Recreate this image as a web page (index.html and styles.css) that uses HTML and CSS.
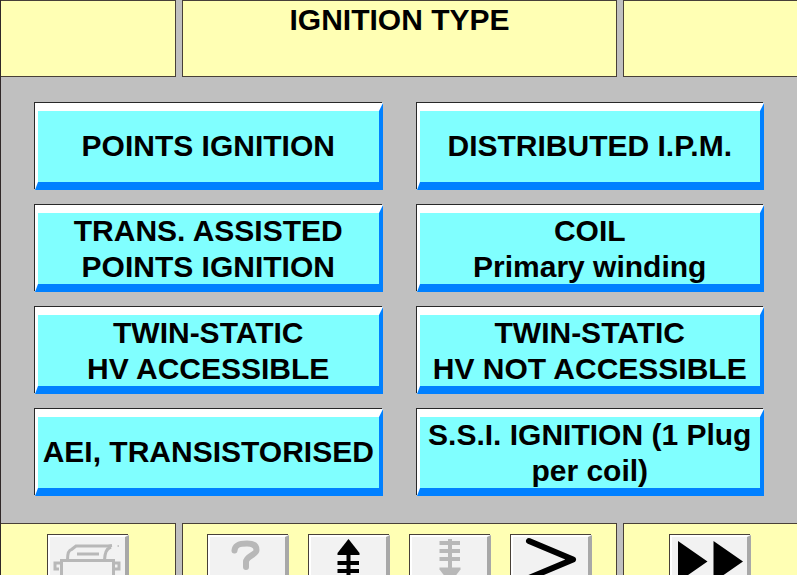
FILE: index.html
```html
<!DOCTYPE html>
<html lang="en">
<head>
    <meta charset="UTF-8">
    <meta name="viewport" content="width=device-width, initial-scale=1.0">
    <title>Ignition Type</title>
    <link rel="stylesheet" href="styles.css">
</head>
<body>
    <header class="bar">
        <div class="panel"></div>
        <div class="panel">
            <h1>IGNITION TYPE</h1>
        </div>
        <div class="panel"></div>
    </header>

    <main class="options">
        <button class="option">POINTS IGNITION</button>
        <button class="option">DISTRIBUTED I.P.M.</button>
        <button class="option">TRANS. ASSISTED<br>POINTS IGNITION</button>
        <button class="option">COIL<br>Primary winding</button>
        <button class="option">TWIN-STATIC<br>HV ACCESSIBLE</button>
        <button class="option">TWIN-STATIC<br>HV NOT ACCESSIBLE</button>
        <button class="option">AEI, TRANSISTORISED</button>
        <button class="option">S.S.I. IGNITION (1 Plug<br>per coil)</button>
    </main>

    <footer class="bar keys">
        <div class="panel">
            <button class="key" aria-label="Print" disabled>
                <svg viewBox="0 0 75 75" fill="none" stroke="currentColor" stroke-width="3">
                    <path d="M17.5 23 C17.5 17 19 13 21.5 12.5 L26 9 H58 L62 8.5"/>
                    <path d="M61 10 C56 12 55 16 54.5 23"/>
                    <path d="M27 17 H49"/>
                    <path d="M11.5 62 V23.5 H63.5 V62 Z"/>
                    <path d="M11 26 H5 V32 H9 M64 26 H69 V32 H65"/>
                    <path d="M67.5 9 H69" stroke-width="1.5"/>
                </svg>
            </button>
        </div>
        <div class="panel">
            <button class="key" aria-label="Help" disabled>
                <svg viewBox="0 0 75 75" fill="none" stroke="currentColor" stroke-width="6" stroke-linecap="round">
                    <path d="M24.5 13.5 C25 8 29 6.5 37 6.5 C44 6.5 46.5 9 46.5 13 C46.5 18 36 19 36 25 V30"/>
                    <path d="M36 41 V41.5"/>
                </svg>
            </button>
            <button class="key" aria-label="Up">
                <svg viewBox="0 0 75 75" fill="none" stroke="currentColor" stroke-width="4">
                    <path d="M37.5 2 L48.5 16 V18 H26.5 V16 Z" fill="currentColor" stroke="none"/>
                    <path d="M37.5 16 V50 M26.5 26 H48 M26.5 34 H48 M26.5 42 H48"/>
                </svg>
            </button>
            <button class="key" aria-label="Down" disabled>
                <svg viewBox="0 0 75 75" fill="none" stroke="currentColor" stroke-width="4">
                    <path d="M38 2 V32 M27.5 6 H48 M27.5 14 H48 M27.5 22 H48"/>
                    <path d="M27.5 30.5 H48.5 V32.5 L38 46 L27.5 32.5 Z" fill="currentColor" stroke="none"/>
                </svg>
            </button>
            <button class="key" aria-label="Next">
                <svg viewBox="0 0 75 75" fill="none" stroke="currentColor" stroke-width="6" stroke-linecap="round" stroke-linejoin="round">
                    <path d="M16 4 L60 22.5 L16 41"/>
                </svg>
            </button>
        </div>
        <div class="panel">
            <button class="key" aria-label="Fast forward">
                <svg viewBox="0 0 75 75" fill="currentColor">
                    <path d="M6 4 L35.5 24.5 L6 45 Z M41.5 4 L71 24.5 L41.5 45 Z"/>
                </svg>
            </button>
        </div>
    </footer>
</body>
</html>
```
FILE: styles.css
```css
* {
    box-sizing: border-box;
}

body {
    margin: 0;
    height: 100vh;
    display: flex;
    flex-direction: column;
    overflow: hidden;
    border-left: 1px solid #302828;
    background-color: #c0c0c0;
    font-family: "Liberation Sans", Arial, sans-serif;
}

/* Top and bottom rows of three yellow panels */
.bar {
    display: grid;
    grid-template-columns: 175fr 435fr 174fr;
    gap: 6px;
    flex: none;
}

.panel {
    min-height: 77px;
    border: 1px solid #484038;
    background-color: #ffffb4;
}

.panel:first-child {
    border-left: none;
}

.panel:last-child {
    border-right: none;
}

h1 {
    margin: 1px 0 0;
    font-size: 30px;
    line-height: 36px;
    text-align: center;
}

.options {
    display: grid;
    grid-template-columns: 1fr 1fr;
    gap: 15px 34px;
    padding: 26px 33px 27px 34px;
}

.option {
    height: 87px;
    padding: 0 0 2px;
    border-style: solid;
    border-width: 8px 4px 8px 3px;
    border-color: #fff #0080ff #0080ff #fff;
    box-shadow: -1px -1px 0 #282828;
    background-color: #80ffff;
    color: #000;
    font-family: inherit;
    font-size: 30px;
    font-weight: bold;
    line-height: 36px;
    white-space: nowrap;
    cursor: pointer;
}

.option:active {
    border-color: #0080ff #fff #fff #0080ff;
}

/* Navigation keys */
.keys {
    flex: 1;
    min-height: 0;
}

.keys .panel {
    display: flex;
    justify-content: center;
    align-items: flex-start;
    gap: 20px;
    min-height: 0;
    padding: 11px 0 0;
    border-bottom: none;
    overflow: hidden;
}

.key {
    width: 81px;
    height: 81px;
    padding: 0;
    border-style: solid;
    border-width: 2px 4px 4px 2px;
    border-color: #fff #a8a8a8 #a8a8a8 #fff;
    box-shadow: -1px -1px 0 #484038;
    background-color: #f2f2f2;
    color: #000;
    cursor: pointer;
}

.key:disabled {
    color: #b8b8b8;
    cursor: default;
}

.key svg {
    display: block;
    width: 75px;
    height: 75px;
}
```
